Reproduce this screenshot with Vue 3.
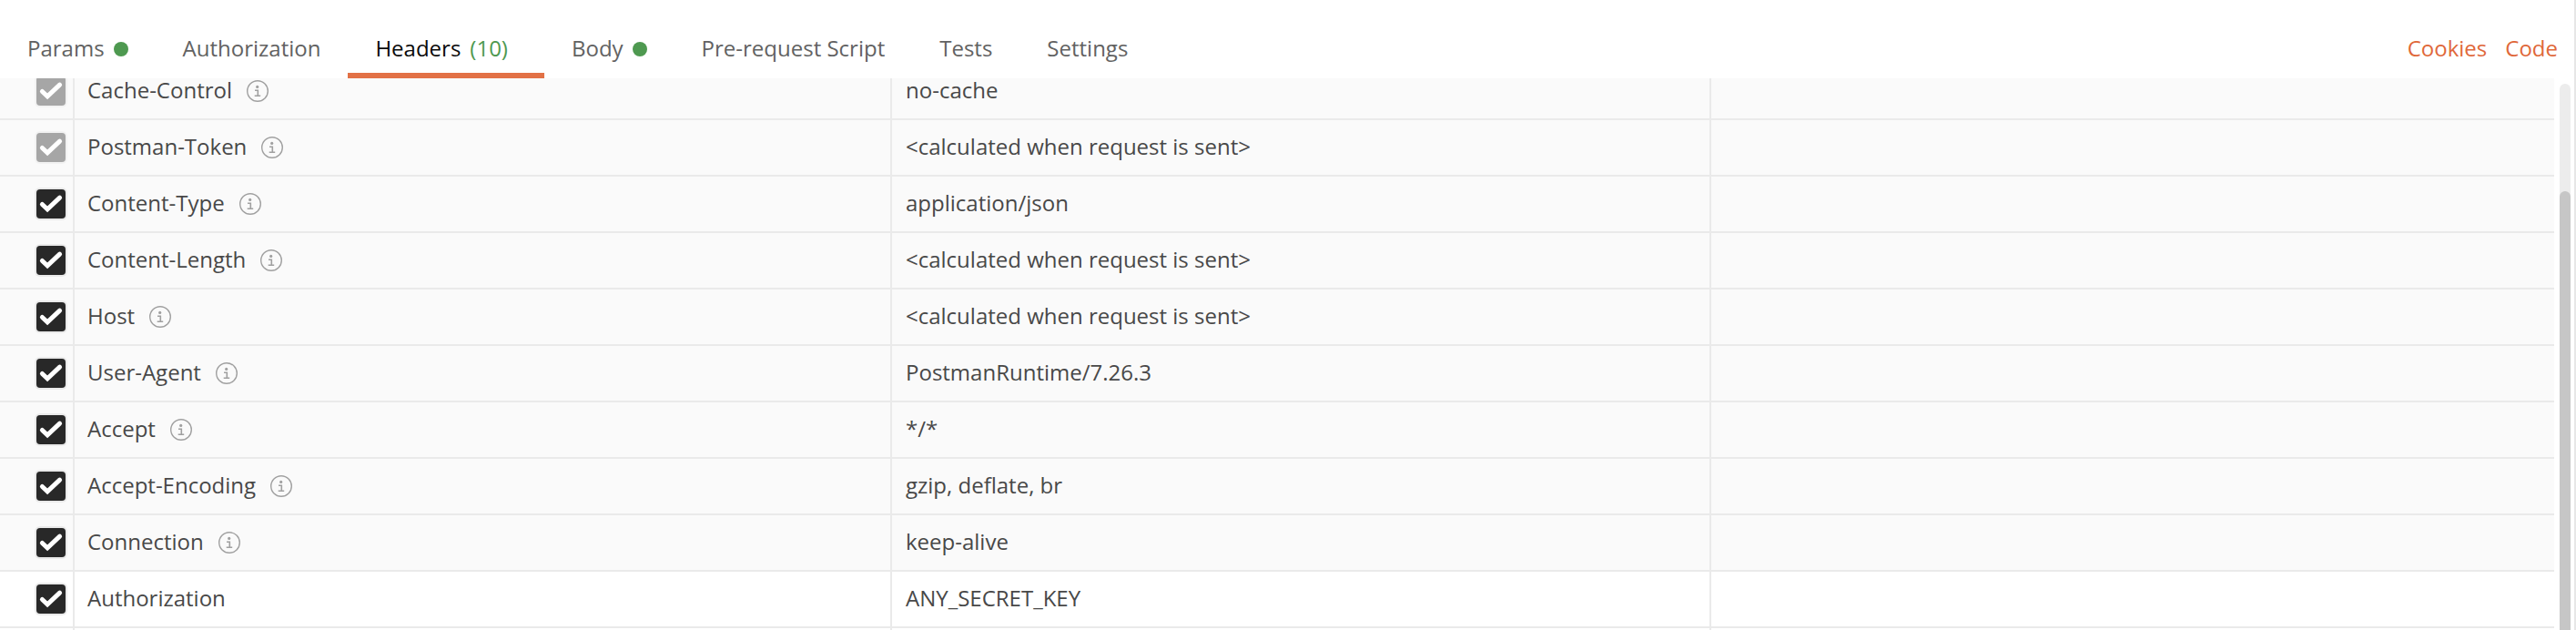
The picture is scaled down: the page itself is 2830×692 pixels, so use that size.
<script setup>
const tabs = [
  { label: 'Params', dot: true },
  { label: 'Authorization' },
  { label: 'Headers', count: '(10)', active: true },
  { label: 'Body', dot: true },
  { label: 'Pre-request Script' },
  { label: 'Tests' },
  { label: 'Settings' },
]
const sent = '<calculated when request is sent>'
const rows = [
  { key: 'Cache-Control', value: 'no-cache', auto: true, locked: true },
  { key: 'Postman-Token', value: sent, auto: true, locked: true },
  { key: 'Content-Type', value: 'application/json', auto: true },
  { key: 'Content-Length', value: sent, auto: true },
  { key: 'Host', value: sent, auto: true },
  { key: 'User-Agent', value: 'PostmanRuntime/7.26.3', auto: true },
  { key: 'Accept', value: '*/*', auto: true },
  { key: 'Accept-Encoding', value: 'gzip, deflate, br', auto: true },
  { key: 'Connection', value: 'keep-alive', auto: true },
  { key: 'Authorization', value: 'ANY_SECRET_KEY' },
]
</script>

<template>
  <div class="pane">
    <nav class="tabs">
      <div v-for="t in tabs" :key="t.label" class="tab" :class="{ active: t.active }">
        <span>{{ t.label }}</span>
        <span v-if="t.count" class="count">{{ t.count }}</span>
        <i v-if="t.dot" class="dot"></i>
      </div>
      <div class="links">
        <a>Cookies</a>
        <a>Code</a>
      </div>
    </nav>
    <div class="body">
      <div class="table">
        <div v-for="r in rows" :key="r.key" class="row" :class="{ auto: r.auto }">
          <div class="cell check">
            <span class="box" :class="{ locked: r.locked }">
              <svg width="32" height="32" viewBox="0 0 32 32">
                <path d="M6.4 16.5 L12.1 21.8 L25.6 9.2" fill="none" stroke="#fff" stroke-width="5" stroke-linecap="round" />
              </svg>
            </span>
          </div>
          <div class="cell key">
            <span class="text">{{ r.key }}</span>
            <svg v-if="r.auto" class="info" width="24" height="24" viewBox="0 0 24 24">
              <circle cx="12" cy="12" r="11.3" fill="none" stroke="#a0a0a0" stroke-width="1.4" />
              <circle cx="11.7" cy="7.4" r="1.6" fill="#a0a0a0" />
              <path d="M9 11.3 H12.3 V17.3 M8.7 17.3 H15.2" fill="none" stroke="#a0a0a0" stroke-width="1.6" />
            </svg>
          </div>
          <div class="cell value"><span class="text">{{ r.value }}</span></div>
          <div class="cell"></div>
        </div>
        <div class="row">
          <div class="cell"></div>
          <div class="cell"></div>
          <div class="cell"></div>
          <div class="cell"></div>
        </div>
      </div>
      <div class="track"><div class="thumb"></div></div>
    </div>
  </div>
</template>

<style>
body {
  margin: 0;
  overflow: hidden;
}
</style>

<style scoped>
.pane {
  box-sizing: border-box;
  width: 2830px;
  height: 692px;
  display: flex;
  flex-direction: column;
  overflow: hidden;
  background: #fff;
  border-right: 2px solid #e6e6e6;
  font-family: 'Open Sans', 'Noto Sans', sans-serif;
  font-size: 24px;
  color: #484848;
}
.tabs {
  flex: none;
  height: 86px;
  display: flex;
}
.tab {
  box-sizing: border-box;
  height: 86px;
  display: flex;
  align-items: center;
  padding: 26px 30px 0;
  border-bottom: 6px solid transparent;
  line-height: 34px;
  color: #626262;
  white-space: nowrap;
}
.tab.active {
  padding-right: 40px;
  color: #0a0a0a;
  border-bottom-color: #e27146;
}
.tab > span {
  padding-bottom: 1px;
}
.tab .count {
  margin-left: 10px;
  color: #4e9950;
}
.dot {
  width: 16px;
  height: 16px;
  margin: 2px 0 0 10px;
  border-radius: 50%;
  background: #4e9950;
}
.links {
  display: flex;
  gap: 20px;
  margin-left: auto;
  padding: 36px 18px 0 0;
  line-height: 34px;
  color: #e0683a;
}
.body {
  flex: 1;
  min-height: 0;
  display: flex;
}
.table {
  width: 2806px;
  margin-top: -16px;
  clip-path: inset(16px 0 0 0);
}
.row {
  height: 62px;
  display: grid;
  grid-template-columns: 82px 898px 900px 926px;
}
.row.auto {
  background: #fafafa;
}
.cell {
  box-sizing: border-box;
  display: flex;
  align-items: center;
  padding-left: 14px;
  border-right: 2px solid #eaeaea;
  border-bottom: 2px solid #eaeaea;
  white-space: nowrap;
}
.cell:last-child {
  border-right: 0;
}
.check {
  padding-left: 40px;
}
.value {
  padding-left: 15px;
}
.box {
  width: 32px;
  height: 32px;
  border-radius: 4px;
  background: #282828;
  box-shadow: 0 0 0 2px #eaeaea;
}
.box.locked {
  background: #a6a6a6;
  box-shadow: 0 0 0 2px #f2f2f2;
}
.box svg {
  display: block;
}
.text {
  line-height: 34px;
  padding-bottom: 2px;
}
.info {
  margin-left: 16px;
}
.track {
  width: 12px;
  margin: 6px 0 0 6px;
  padding-top: 118px;
  box-sizing: border-box;
  border-radius: 6px 6px 0 0;
  background: #ececec;
}
.thumb {
  height: 100%;
  border-radius: 6px 6px 0 0;
  background: #c6c6c6;
}
</style>
